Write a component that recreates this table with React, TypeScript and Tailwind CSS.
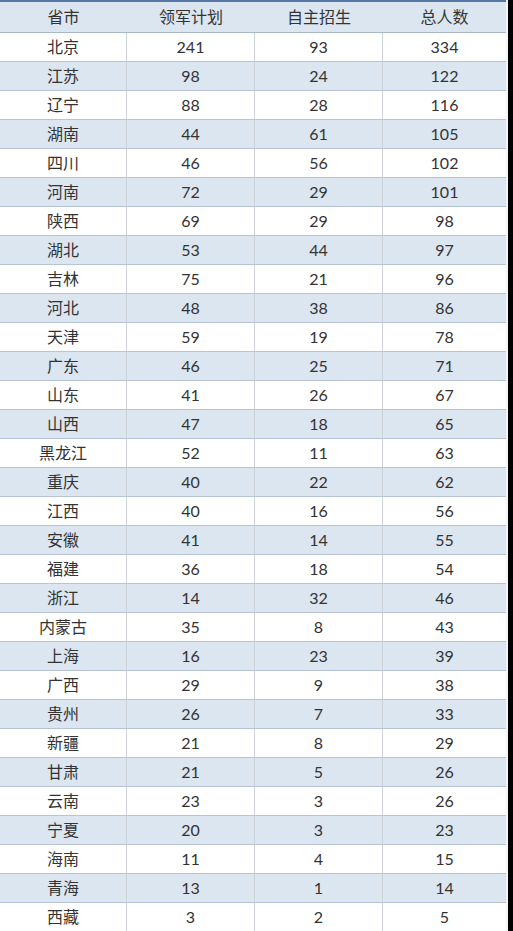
import React from 'react';

type Row = [string, number, number, number];

const rows: Row[] = [
    ['北京', 241, 93, 334],
    ['江苏', 98, 24, 122],
    ['辽宁', 88, 28, 116],
    ['湖南', 44, 61, 105],
    ['四川', 46, 56, 102],
    ['河南', 72, 29, 101],
    ['陕西', 69, 29, 98],
    ['湖北', 53, 44, 97],
    ['吉林', 75, 21, 96],
    ['河北', 48, 38, 86],
    ['天津', 59, 19, 78],
    ['广东', 46, 25, 71],
    ['山东', 41, 26, 67],
    ['山西', 47, 18, 65],
    ['黑龙江', 52, 11, 63],
    ['重庆', 40, 22, 62],
    ['江西', 40, 16, 56],
    ['安徽', 41, 14, 55],
    ['福建', 36, 18, 54],
    ['浙江', 14, 32, 46],
    ['内蒙古', 35, 8, 43],
    ['上海', 16, 23, 39],
    ['广西', 29, 9, 38],
    ['贵州', 26, 7, 33],
    ['新疆', 21, 8, 29],
    ['甘肃', 21, 5, 26],
    ['云南', 23, 3, 26],
    ['宁夏', 20, 3, 23],
    ['海南', 11, 4, 15],
    ['青海', 13, 1, 14],
    ['西藏', 3, 2, 5],
];

const headers = ['省市', '领军计划', '自主招生', '总人数'];

export default function App() {
    return (
        <div
            className="flex w-[513px] h-[931px] overflow-hidden bg-white text-[#333] text-[16px]"
            style={{ fontFamily: 'Lato, "Noto Sans CJK SC", sans-serif' }}
        >
            <div className="flex-1 flex flex-col border-r-2 border-[#f2f4f7]">
                {/* Header */}
                <div className="grid grid-cols-[127px_128px_128px_1fr] h-[33px] shrink-0 bg-[#dce6f1] border-t-2 border-[#5676a6] border-b border-b-[#a9b7cc]">
                    {headers.map(h => (
                        <div key={h} className="flex items-center justify-center leading-none">{h}</div>
                    ))}
                </div>

                {/* Body */}
                {rows.map((r, i) => (
                    <div
                        key={r[0]}
                        className={`grid grid-cols-[127px_128px_128px_1fr] h-[29px] shrink-0 border-b border-[#b7c3d6] ${i % 2 === 1 ? 'bg-[#dce6f1]' : 'bg-white'}`}
                    >
                        {r.map((c, j) => (
                            <div
                                key={j}
                                className={`flex items-center justify-center leading-none ${j < 3 ? 'border-r border-[#cdd1d8]' : ''}`}
                            >
                                {c}
                            </div>
                        ))}
                    </div>
                ))}
            </div>
            <div className="w-[5px] shrink-0 bg-black" />
        </div>
    );
}
